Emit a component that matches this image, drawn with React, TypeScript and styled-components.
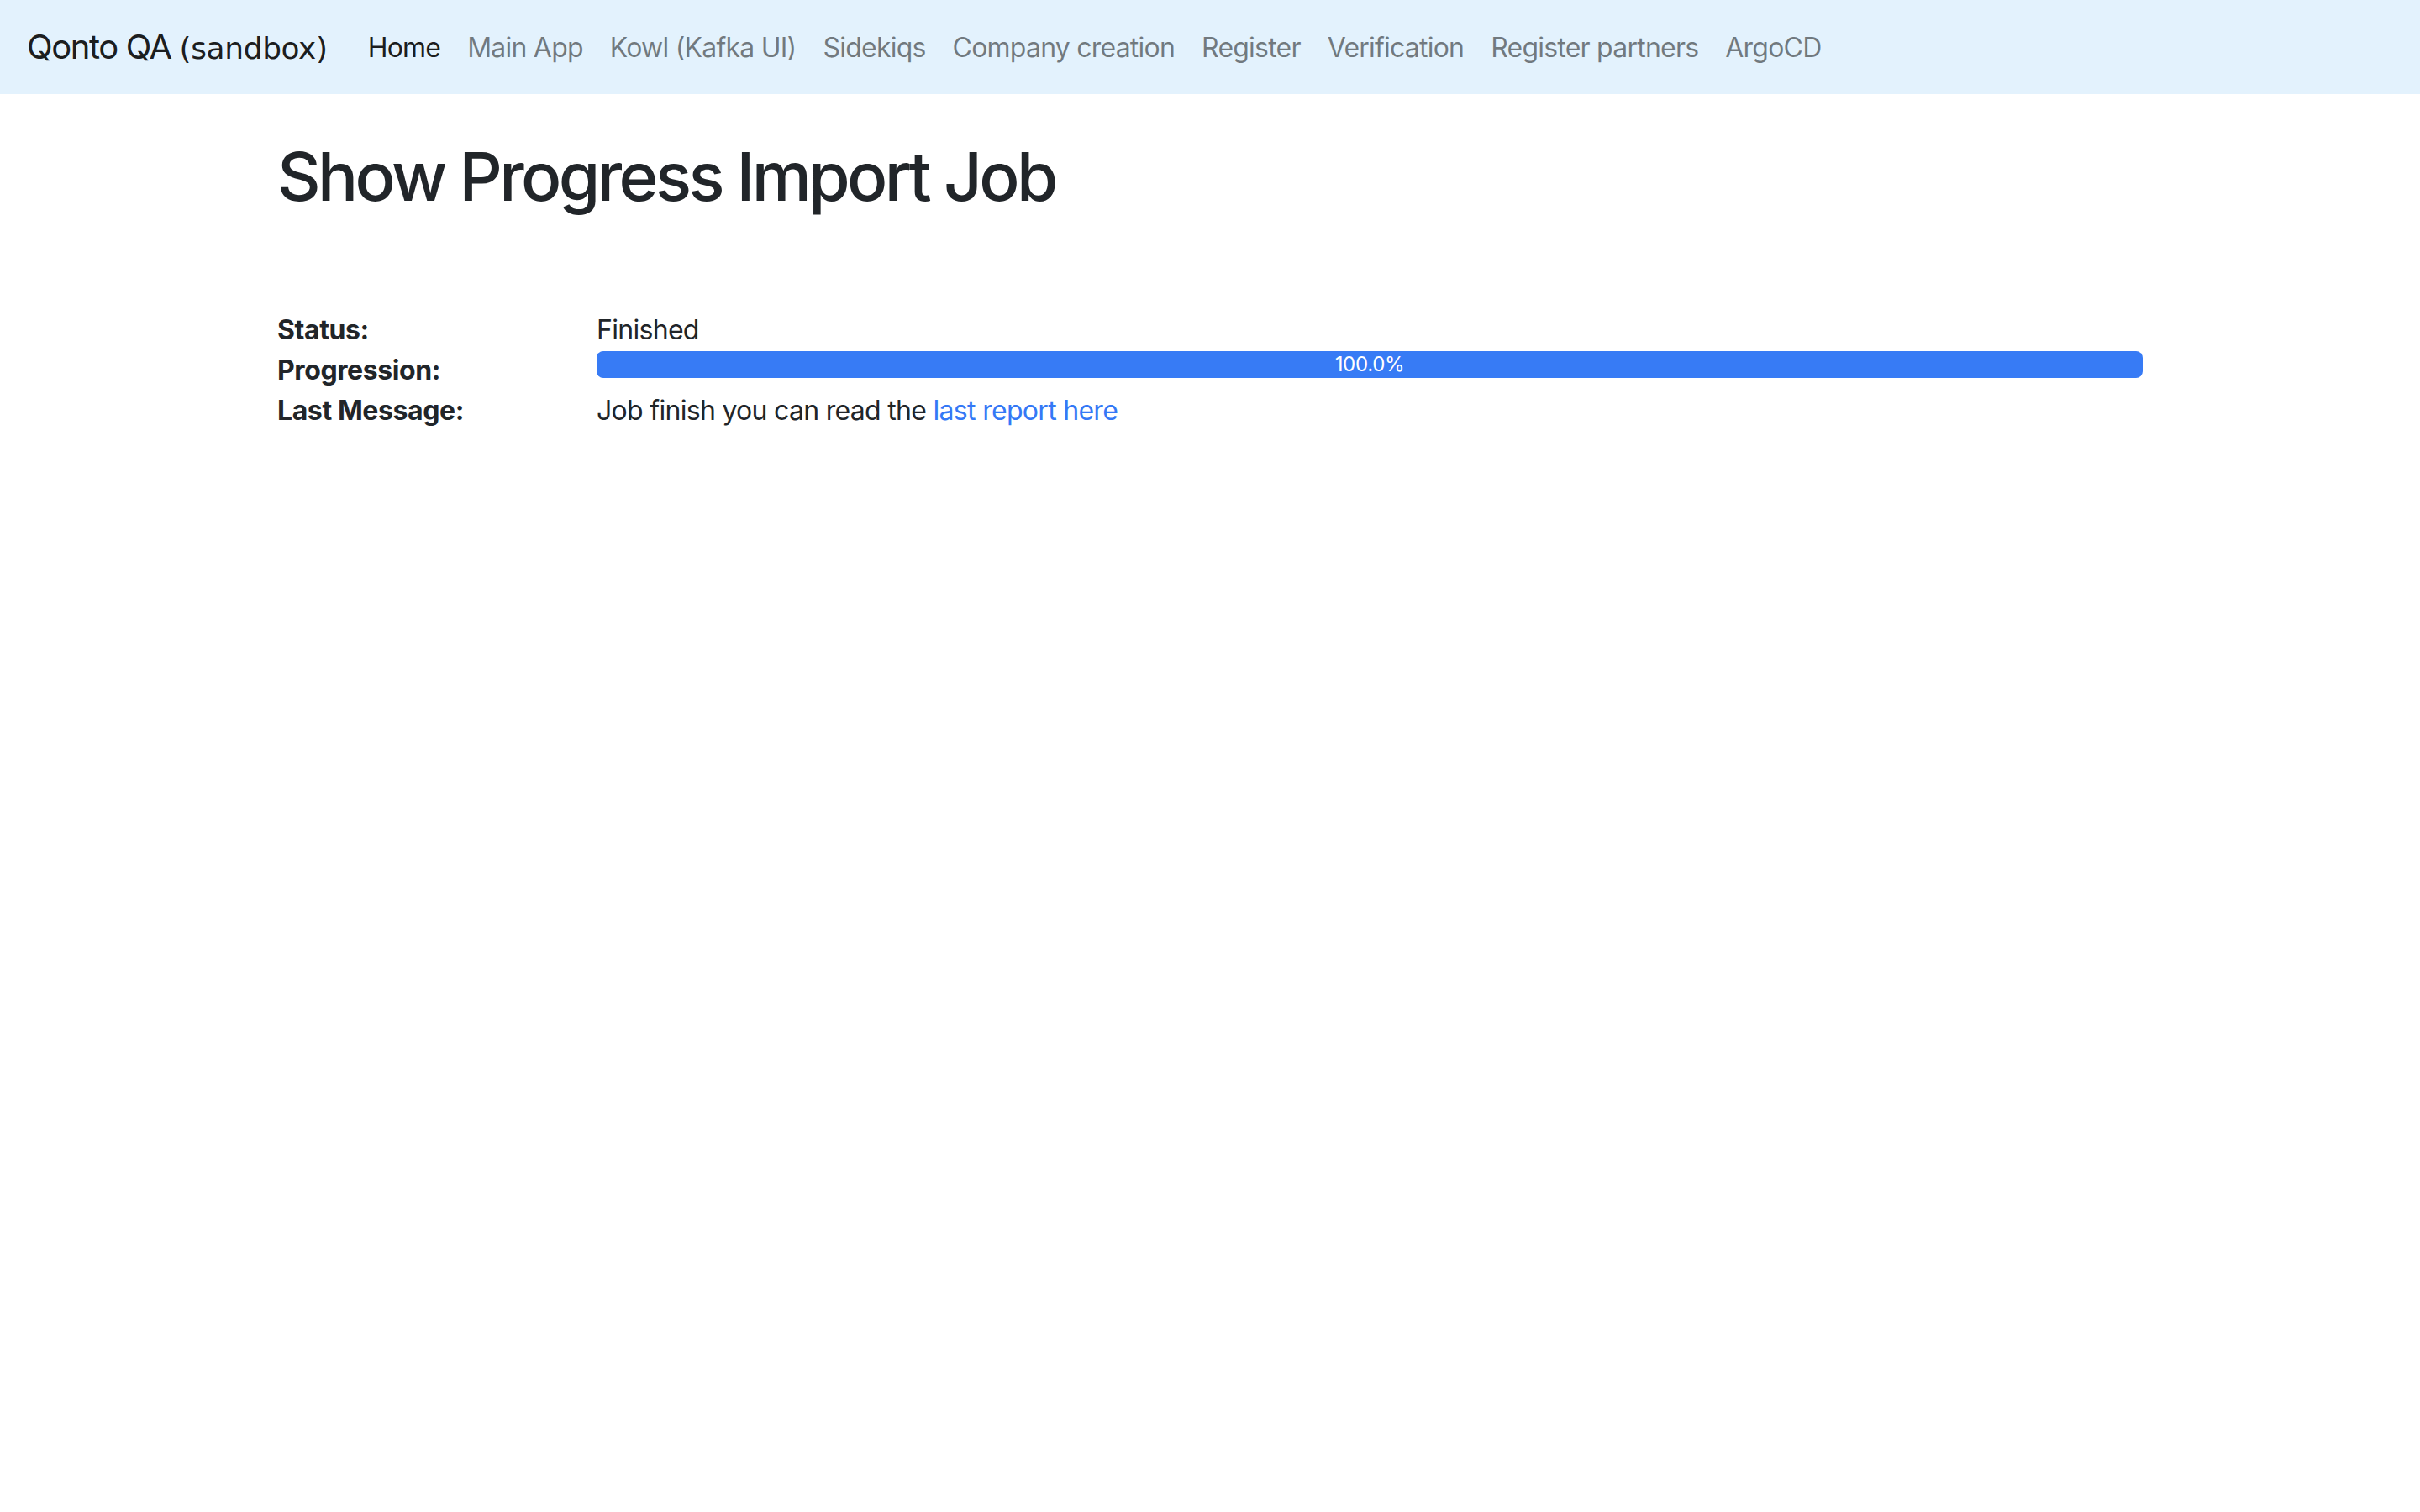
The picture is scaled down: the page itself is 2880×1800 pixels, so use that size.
import React from 'react'
import styled, { createGlobalStyle } from 'styled-components';

// page was captured at 2x, so every bootstrap value here is doubled
const GlobalStyle = createGlobalStyle`
    body {
        margin: 0;
        background: #fff;
        color: #212529;
        font-family: Inter, "Noto Sans", "Liberation Sans", sans-serif;
        font-size: 32px;
        line-height: 48px;
    }
`;

const Navbar = styled.nav`
    display: flex;
    align-items: center;
    height: 112px;
    padding: 2px 32px 0;
    background: #e3f2fd;
    box-sizing: border-box;
`;

const Brand = styled.a`
    font-size: 40px;
    line-height: 60px;
    color: rgba(0, 0, 0, 0.9);
    margin-right: 32px;
    text-decoration: none;
    letter-spacing: -1.4px;
    white-space: nowrap;
    > span {
        font-family: "DejaVu Sans", sans-serif;
        font-size: 36px;
        letter-spacing: -0.4px;
    }
`;

const NavList = styled.ul`
    display: flex;
    list-style: none;
    margin: 0;
    padding: 0;
`;

const NavLink = styled.a<{ $active?: boolean }>`
    display: block;
    padding: 16px;
    font-size: 32px;
    line-height: 48px;
    letter-spacing: -0.78px;
    text-decoration: none;
    white-space: nowrap;
    color: ${p => (p.$active ? 'rgba(0, 0, 0, 0.9)' : 'rgba(0, 0, 0, 0.5)')};
`;

const Container = styled.main`
    width: 2220px;
    margin: 0 auto;
`;

const Title = styled.h1`
    font-size: 80px;
    line-height: 96px;
    font-weight: 500;
    letter-spacing: -3.6px;
    margin: 50px 0 16px;
`;

const Details = styled.div`
    margin-top: 111px;
`;

const Row = styled.div`
    display: grid;
    grid-template-columns: 350px 1fr;
    column-gap: 30px;
    min-height: 48px;
    letter-spacing: -0.7px;
`;

const Label = styled.div`
    font-weight: 700;
    letter-spacing: -0.4px;
`;

const Progress = styled.div`
    display: flex;
    height: 32px;
    margin-top: 1px;
    background: #e9ecef;
    border-radius: 8px;
    overflow: hidden;
`;

const Bar = styled.div`
    display: flex;
    justify-content: center;
    align-items: center;
    background: #377bf5;
    color: #fff;
    font-size: 24px;
    line-height: 32px;
    letter-spacing: -0.3px;
`;

const Link = styled.a`
    color: #3478f6;
    text-decoration: none;
`;

const navItems = [
    'Main App',
    'Kowl (Kafka UI)',
    'Sidekiqs',
    'Company creation',
    'Register',
    'Verification',
    'Register partners',
    'ArgoCD',
];

const progress = 100;

const App = () =>
  <>
    <GlobalStyle />
    <Navbar>
      <Brand href="#">Qonto QA <span>(sandbox)</span></Brand>
      <NavList>
        <li><NavLink $active href="#">Home</NavLink></li>
        {navItems.map(item =>
          <li key={item}><NavLink href="#">{item}</NavLink></li>
        )}
      </NavList>
    </Navbar>
    <Container>
      <Title>Show Progress Import Job</Title>
      <Details>
        <Row>
          <Label>Status:</Label>
          <div>Finished</div>
        </Row>
        <Row>
          <Label>Progression:</Label>
          <div>
            <Progress>
              <Bar style={{ width: `${progress}%` }}>{progress.toFixed(1)}%</Bar>
            </Progress>
          </div>
        </Row>
        <Row>
          <Label>Last Message:</Label>
          <div>Job finish you can read the <Link href="#">last report here</Link></div>
        </Row>
      </Details>
    </Container>
  </>;

export default App;
